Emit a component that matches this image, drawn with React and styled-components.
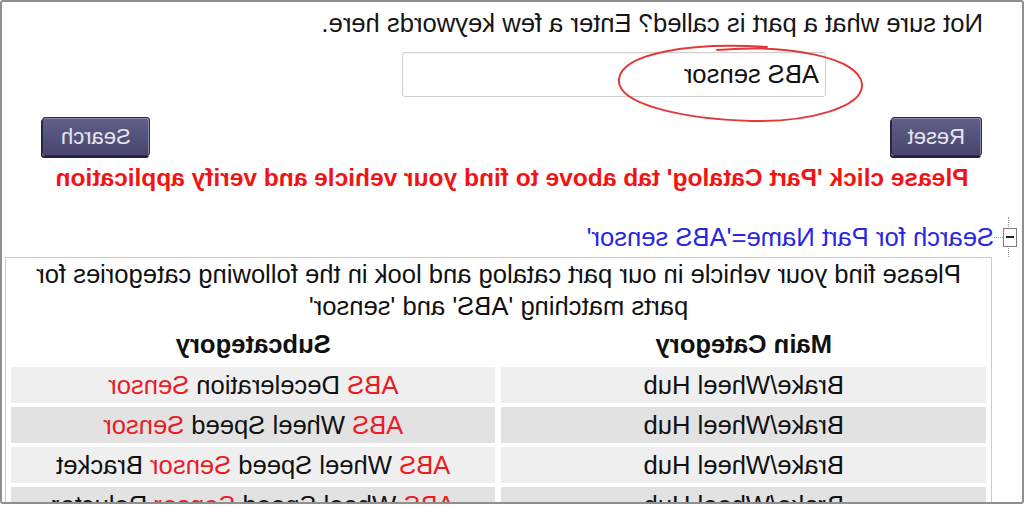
import React from "react";
import styled, { createGlobalStyle } from "styled-components";

const GlobalStyle = createGlobalStyle`
    html, body {
        margin: 0;
        padding: 0;
        background: #ffffff;
    }
    body {
        font-family: "Liberation Sans", Arial, sans-serif;
        color: #111111;
    }
`;

// the reference shot is flipped left-to-right, so the whole frame is mirrored
const Frame = styled.div`
    position: relative;
    box-sizing: border-box;
    width: 1024px;
    height: 504px;
    border: 2px solid #8f8f8f;
    border-radius: 3px;
    overflow: hidden;
    background: #ffffff;
    transform: scaleX(-1);
`;

const Prompt = styled.div`
    padding: 6px 0 0 39px;
    font-size: 25.6px;
    line-height: 30px;
    color: #151515;
`;

const InputRow = styled.div`
    margin-top: 14px;
    padding-left: 196px;
    height: 45px;
`;

const KeywordInput = styled.input`
    box-sizing: border-box;
    width: 424px;
    height: 45px;
    margin: 0;
    padding: 0 6px;
    border: 1px solid #cfcfcf;
    border-radius: 3px;
    box-shadow: inset 0 1px 2px rgba(0,0,0,0.06);
    font: inherit;
    font-size: 25.6px;
    color: #111111;
    background: #ffffff;
    outline: none;
`;

const ButtonRow = styled.div`
    margin-top: 20px;
    padding: 0 40px;
    height: 39px;
    display: flex;
    justify-content: space-between;
`;

const Button = styled.button`
    box-sizing: border-box;
    height: 39px;
    margin: 0;
    padding: 0 ${({ wide }) => (wide ? "18px" : "16px")};
    border: 1px solid #2b2a44;
    border-radius: 3px;
    background: linear-gradient(#615f8a, #48466d);
    box-shadow: inset 1px 1px 0 #8d8bb4, 1px 2px 0 #24233a;
    color: #e6e6ef;
    font-family: "Liberation Sans", Arial, sans-serif;
    font-size: 22px;
    cursor: pointer;
`;

const Notice = styled.div`
    margin-top: 7px;
    text-align: center;
    font-size: 24.5px;
    line-height: 30px;
    font-weight: 700;
    color: #f21414;
`;

const TreeRow = styled.div`
    position: relative;
    margin-top: 24px;
    height: 40px;
    display: flex;
    align-items: center;
`;

const TreeLine = styled.div`
    position: absolute;
    left: 13px;
    top: 0;
    bottom: 0;
    border-left: 1px dotted #9a9a9a;
`;

const Toggle = styled.div`
    position: relative;
    box-sizing: border-box;
    margin-left: 5px;
    width: 14px;
    height: 19px;
    border: 1px solid #7d7d7d;
    background: #ffffff;
    display: flex;
    align-items: center;
    justify-content: center;

    &::after {
        content: "";
        width: 8px;
        border-top: 2px solid #222222;
    }
`;

const Connector = styled.div`
    width: 9px;
    border-top: 1px dotted #9a9a9a;
`;

const ResultLink = styled.a`
    font-size: 25.6px;
    line-height: 30px;
    color: #2626e4;
    text-decoration: none;
`;

const ResultBox = styled.div`
    box-sizing: border-box;
    margin-left: 30px;
    width: 987px;
    border: 1px solid #cacaca;
    padding: 0 5px 10px;
`;

const Intro = styled.div`
    text-align: center;
    font-size: 25.6px;
    line-height: 32px;
`;

const Grid = styled.div`
    display: grid;
    grid-template-columns: 1fr 1fr;
    gap: 4px 6px;
`;

const HeadCell = styled.div`
    height: 41px;
    padding-top: 3px;
    box-sizing: border-box;
    display: flex;
    align-items: center;
    justify-content: center;
    font-size: 25.6px;
    font-weight: 700;
`;

const Cell = styled.div`
    height: 36px;
    display: flex;
    align-items: center;
    justify-content: center;
    font-size: 25.6px;
    background-color: ${({ dark }) => (dark ? "#e2e2e2" : "#efefef")};
    white-space: nowrap;
`;

const Label = styled.span`
    white-space: pre;
`;

const Hit = styled.span`
    color: #ec1c24;
`;

const Scribble = styled.svg`
    position: absolute;
    left: 155px;
    top: 40px;
    width: 256px;
    height: 84px;
    pointer-events: none;
`;

const rows = [
    { main: "Brake/Wheel Hub", sub: "ABS Deceleration Sensor" },
    { main: "Brake/Wheel Hub", sub: "ABS Wheel Speed Sensor" },
    { main: "Brake/Wheel Hub", sub: "ABS Wheel Speed Sensor Bracket" },
    { main: "Brake/Wheel Hub", sub: "ABS Wheel Speed Sensor Reluctor" },
];

const Highlight = ({ text }) => (
    <Label>
        {text.split(/(ABS|Sensor)/).map((part, i) =>
            part === "ABS" || part === "Sensor" ? <Hit key={i}>{part}</Hit> : part
        )}
    </Label>
);

const App = () => {
    return (
        <>
            <GlobalStyle />
            <Frame>
                <Prompt>Not sure what a part is called? Enter a few keywords here.</Prompt>
                <InputRow>
                    <KeywordInput value="ABS sensor" readOnly />
                </InputRow>
                <ButtonRow>
                    <Button>Reset</Button>
                    <Button wide>Search</Button>
                </ButtonRow>
                <Notice>Please click 'Part Catalog' tab above to find your vehicle and verify application</Notice>
                <TreeRow>
                    <TreeLine />
                    <Toggle />
                    <Connector />
                    <ResultLink href="#">Search for Part Name='ABS sensor'</ResultLink>
                </TreeRow>
                <ResultBox>
                    <Intro>
                        Please find your vehicle in our part catalog and look in the following categories for
                        <br />
                        parts matching 'ABS' and 'sensor'
                    </Intro>
                    <Grid>
                        <HeadCell>Main Category</HeadCell>
                        <HeadCell>Subcategory</HeadCell>
                        {rows.map((row, i) => (
                            <React.Fragment key={i}>
                                <Cell dark={i % 2 === 1}>
                                    <Label>{row.main}</Label>
                                </Cell>
                                <Cell dark={i % 2 === 1}>
                                    <Highlight text={row.sub} />
                                </Cell>
                            </React.Fragment>
                        ))}
                    </Grid>
                </ResultBox>
                <Scribble viewBox="0 0 256 84">
                    <path
                        d="M150 8 C80 2, 8 15, 5 42 C3 66, 60 80, 115 79 C185 77, 251 62, 248 37 C245 12, 180 0, 100 5"
                        fill="none"
                        stroke="#e23a3a"
                        strokeWidth="2"
                        strokeLinecap="round"
                    />
                </Scribble>
            </Frame>
        </>
    );
};

export default App;
